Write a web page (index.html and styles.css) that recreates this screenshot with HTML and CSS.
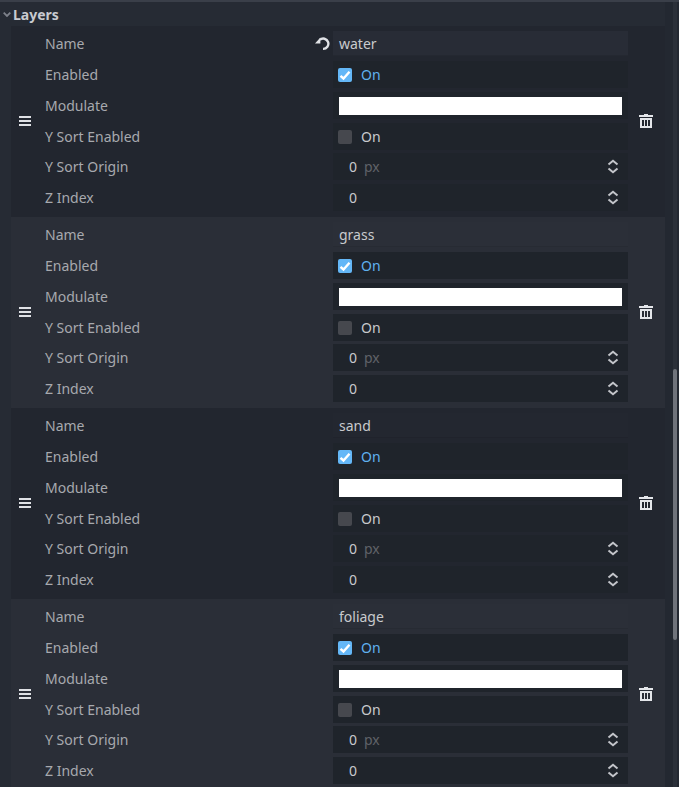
FILE: index.html
```html
<!DOCTYPE html>
<html lang="en">
<head>
<meta charset="utf-8">
<title>Layers</title>
<link rel="stylesheet" href="styles.css">
</head>
<body>
<svg class="defs" width="0" height="0" aria-hidden="true">
  <symbol id="grip" viewBox="0 0 12 10"><path d="M0 0h12v2H0zM0 4h12v2H0zM0 8h12v2H0z" fill="#dfe1e5"/></symbol>
  <symbol id="trash" viewBox="0 0 14 14"><path d="M5 0h4v1h5v2H0V1h5zM1 4h12v10H1zM3 6v6h2V6zM6 6v6h2V6zM9 6v6h2V6z" fill="#e4e6ea" fill-rule="evenodd"/></symbol>
  <symbol id="spin" viewBox="0 0 12 14"><path d="M1.500 5 6 1.300 10.500 5M1.500 9 6 12.700 10.500 9" fill="none" stroke="#c3c5ca" stroke-width="2"/></symbol>
  <symbol id="check" viewBox="0 0 14 14"><path d="M2.500 7.800 5.500 10.500 11.500 3.800" fill="none" stroke="#fff" stroke-width="2.400"/></symbol>
</svg>
<main class="panel">
  <div class="topline"></div>
  <h2 class="section"><svg class="chev" viewBox="0 0 8 5"><path d="M.7.700 4 4 7.300.7" fill="none" stroke="#7d818a" stroke-width="1.800"/></svg>Layers</h2>

  <section class="layer">
    <div class="grip"><svg><use href="#grip"/></svg></div>
    <div class="props">
      <div class="prop"><span class="label">Name</span><svg class="revert" viewBox="0 0 14 14"><path d="M4.500 3.600A4.800 4.800 0 1 1 7.500 12" fill="none" stroke="#e0e2e6" stroke-width="2.200"/><path d="M0 7 5 1.500V7z" fill="#e0e2e6"/></svg><div class="ctl text changed">water</div></div>
      <div class="prop"><span class="label">Enabled</span><div class="ctl chk on"><span class="box"><svg><use href="#check"/></svg></span>On</div></div>
      <div class="prop"><span class="label">Modulate</span><div class="ctl swatch"><span class="white"></span></div></div>
      <div class="prop short"><span class="label">Y Sort Enabled</span><div class="ctl chk"><span class="box"></span>On</div></div>
      <div class="prop"><span class="label">Y Sort Origin</span><div class="ctl num"><span class="val">0</span><span class="unit">px</span><svg class="spin"><use href="#spin"/></svg></div></div>
      <div class="prop"><span class="label">Z Index</span><div class="ctl num"><span class="val">0</span><svg class="spin"><use href="#spin"/></svg></div></div>
    </div>
    <div class="del"><svg><use href="#trash"/></svg></div>
  </section>

  <section class="layer alt">
    <div class="grip"><svg><use href="#grip"/></svg></div>
    <div class="props">
      <div class="prop"><span class="label">Name</span><div class="ctl text">grass</div></div>
      <div class="prop"><span class="label">Enabled</span><div class="ctl chk on"><span class="box"><svg><use href="#check"/></svg></span>On</div></div>
      <div class="prop"><span class="label">Modulate</span><div class="ctl swatch"><span class="white"></span></div></div>
      <div class="prop short"><span class="label">Y Sort Enabled</span><div class="ctl chk"><span class="box"></span>On</div></div>
      <div class="prop"><span class="label">Y Sort Origin</span><div class="ctl num"><span class="val">0</span><span class="unit">px</span><svg class="spin"><use href="#spin"/></svg></div></div>
      <div class="prop"><span class="label">Z Index</span><div class="ctl num"><span class="val">0</span><svg class="spin"><use href="#spin"/></svg></div></div>
    </div>
    <div class="del"><svg><use href="#trash"/></svg></div>
  </section>

  <section class="layer">
    <div class="grip"><svg><use href="#grip"/></svg></div>
    <div class="props">
      <div class="prop"><span class="label">Name</span><div class="ctl text">sand</div></div>
      <div class="prop"><span class="label">Enabled</span><div class="ctl chk on"><span class="box"><svg><use href="#check"/></svg></span>On</div></div>
      <div class="prop"><span class="label">Modulate</span><div class="ctl swatch"><span class="white"></span></div></div>
      <div class="prop short"><span class="label">Y Sort Enabled</span><div class="ctl chk"><span class="box"></span>On</div></div>
      <div class="prop"><span class="label">Y Sort Origin</span><div class="ctl num"><span class="val">0</span><span class="unit">px</span><svg class="spin"><use href="#spin"/></svg></div></div>
      <div class="prop"><span class="label">Z Index</span><div class="ctl num"><span class="val">0</span><svg class="spin"><use href="#spin"/></svg></div></div>
    </div>
    <div class="del"><svg><use href="#trash"/></svg></div>
  </section>

  <section class="layer alt">
    <div class="grip"><svg><use href="#grip"/></svg></div>
    <div class="props">
      <div class="prop"><span class="label">Name</span><div class="ctl text">foliage</div></div>
      <div class="prop"><span class="label">Enabled</span><div class="ctl chk on"><span class="box"><svg><use href="#check"/></svg></span>On</div></div>
      <div class="prop"><span class="label">Modulate</span><div class="ctl swatch"><span class="white"></span></div></div>
      <div class="prop short"><span class="label">Y Sort Enabled</span><div class="ctl chk"><span class="box"></span>On</div></div>
      <div class="prop"><span class="label">Y Sort Origin</span><div class="ctl num"><span class="val">0</span><span class="unit">px</span><svg class="spin"><use href="#spin"/></svg></div></div>
      <div class="prop"><span class="label">Z Index</span><div class="ctl num"><span class="val">0</span><svg class="spin"><use href="#spin"/></svg></div></div>
    </div>
    <div class="del"><svg><use href="#trash"/></svg></div>
  </section>

  <div class="gutter"><div class="scrollbar"><div class="thumb"></div></div></div>
</main>
</body>
</html>
```

FILE: styles.css
```css
html, body {
  margin: 0;
  height: 100%;
  overflow: hidden;
  background: #262b34;
}
.defs { position: absolute; }
.panel {
  position: relative;
  height: 787px;
  overflow: hidden;
  font: 14px "Noto Sans", sans-serif;
  color: #c2c4c8;
}
.topline { height: 2px; background: #3a3f49; }
.section {
  display: flex;
  align-items: center;
  height: 24px;
  margin: 0;
  padding: 0 0 0 3px;
  font: 700 14px "Noto Sans", sans-serif;
  color: #c8cad0;
  box-sizing: border-box;
}
.chev { width: 8px; height: 5px; margin-right: 2px; }
.layer {
  display: flex;
  height: 191px;
  margin: 0 13px 0 11px;
  background: #22262f;
}
.layer.alt { background: #2a2e37; }
.grip {
  flex: none;
  width: 34px;
  display: flex;
  align-items: center;
  justify-content: flex-start;
  padding: 0 0 1px 8px;
  box-sizing: border-box;
}
.grip svg { width: 12px; height: 10px; }
.props {
  flex: none;
  width: 583px;
  padding-top: 4px;
  box-sizing: border-box;
}
.prop {
  position: relative;
  display: flex;
  align-items: flex-start;
  justify-content: space-between;
  height: 31px;
}
.prop.short { height: 30px; }
.label {
  line-height: 27px;
  color: #a7a9ae;
}
.revert {
  position: absolute;
  left: 270px;
  top: 6px;
  width: 15px;
  height: 15px;
}
.ctl {
  position: relative;
  flex: none;
  box-sizing: border-box;
  width: 295px;
  height: 27px;
  display: flex;
  align-items: center;
  background: #1f242b;
  line-height: 27px;
  color: #c8cacd;
}
.text {
  background: rgba(255, 255, 255, 0.006);
  border-bottom: 1px solid rgba(0, 0, 0, 0.08);
  padding-left: 6px;
  height: 25px;
  margin-top: 1px;
}
.text.changed { background: #282c36; }
.chk { padding-left: 5px; gap: 9px; }
.chk.on { color: #5fb1ef; }
.box {
  width: 14px;
  height: 14px;
  border-radius: 2px;
  background: #46484e;
  display: block;
}
.on .box { background: #64b7f7; }
.box svg { display: block; width: 14px; height: 14px; }
.swatch { padding: 0 6px; }
.white { display: block; width: 100%; height: 18px; background: #fff; }
.num { padding-left: 16px; gap: 7px; }
.unit { color: #5f6268; }
.spin {
  position: absolute;
  right: 9px;
  top: 6px;
  width: 12px;
  height: 15px;
}
.del {
  flex: none;
  width: 36px;
  padding-bottom: 2px;
  box-sizing: border-box;
  display: flex;
  align-items: center;
  justify-content: center;
}
.del svg { width: 14px; height: 14px; }
.gutter {
  position: absolute;
  right: 0;
  top: 2px;
  bottom: 0;
  width: 14px;
  background: #232831;
}
.scrollbar {
  position: absolute;
  right: 2px;
  top: 0;
  bottom: 0;
  width: 4px;
  background: #2b3039;
}
.thumb {
  position: absolute;
  top: 367px;
  left: 0;
  right: 0;
  height: 271px;
  border-radius: 2px;
  background: #6f737b;
}
```
